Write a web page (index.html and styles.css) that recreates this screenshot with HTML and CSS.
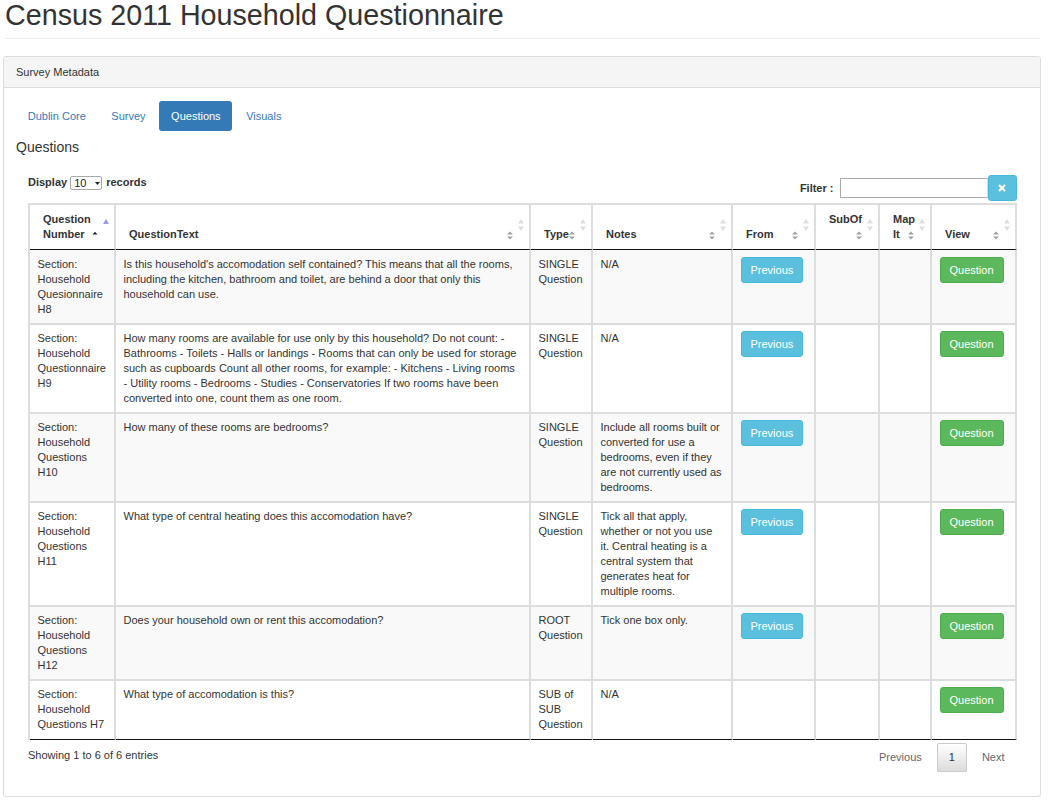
FILE: index.html
```html
<!DOCTYPE html>
<html lang="en">
<head>
<meta charset="utf-8">
<title>Census 2011 Household Questionnaire</title>
<link rel="stylesheet" href="styles.css">
</head>
<body>
<div class="container">
  <div class="page-header"><h1>Census 2011 Household Questionnaire</h1></div>
  <div class="panel">
    <div class="panel-heading">Survey Metadata</div>
    <div class="panel-body">
      <ul class="nav">
        <li><a href="#">Dublin Core</a></li>
        <li><a href="#">Survey</a></li>
        <li class="active"><a href="#">Questions</a></li>
        <li><a href="#">Visuals</a></li>
      </ul>
      <h4 class="section-title">Questions</h4>
      <div class="dt-wrap">
        <div class="dt-top">
          <div class="dt-length">Display <span class="select">10 <svg width="5" height="3" viewBox="0 0 5 3"><polygon points="0,0 5,0 2.5,3" fill="#222"/></svg></span> records</div>
          <div class="dt-filter">
            <span class="filter-label">Filter :</span>
            <span class="filter-input"></span>
            <span class="btn-clear"><svg width="8" height="8" viewBox="0 0 8 8"><path d="M1 1 L7 7 M7 1 L1 7" stroke="#fff" stroke-width="2.2"/></svg></span>
          </div>
        </div>
        <table class="dt">
          <thead>
            <tr>
              <th class="c1">Question Number<span class="sg"><svg width="6" height="9" viewBox="0 0 6 9"><polygon points="0.5,3.5 3,0.8 5.5,3.5" fill="#222"/></svg></span><span class="sf"><svg width="6" height="12" viewBox="0 0 6 12"><polygon points="0,5 3,0 6,5" fill="#9a9ae2"/></svg></span></th>
              <th class="c2">QuestionText<span class="sg"><svg width="6" height="9" viewBox="0 0 6 9"><polygon points="0,3.5 3,0.5 6,3.5" fill="#a0a0a0"/><polygon points="0,5.5 3,8.5 6,5.5" fill="#a0a0a0"/></svg></span><span class="sf"><svg width="6" height="12" viewBox="0 0 6 12"><polygon points="0,4.5 3,0 6,4.5" fill="#dedede"/><polygon points="0,7.5 3,12 6,7.5" fill="#dedede"/></svg></span></th>
              <th class="c3">Type<span class="sg sg-tight"><svg width="6" height="9" viewBox="0 0 6 9"><polygon points="0,3.5 3,0.5 6,3.5" fill="#a0a0a0"/><polygon points="0,5.5 3,8.5 6,5.5" fill="#a0a0a0"/></svg></span><span class="sf"><svg width="6" height="12" viewBox="0 0 6 12"><polygon points="0,4.5 3,0 6,4.5" fill="#dedede"/><polygon points="0,7.5 3,12 6,7.5" fill="#dedede"/></svg></span></th>
              <th class="c4">Notes<span class="sg"><svg width="6" height="9" viewBox="0 0 6 9"><polygon points="0,3.5 3,0.5 6,3.5" fill="#a0a0a0"/><polygon points="0,5.5 3,8.5 6,5.5" fill="#a0a0a0"/></svg></span><span class="sf"><svg width="6" height="12" viewBox="0 0 6 12"><polygon points="0,4.5 3,0 6,4.5" fill="#dedede"/><polygon points="0,7.5 3,12 6,7.5" fill="#dedede"/></svg></span></th>
              <th class="c5">From<span class="sg"><svg width="6" height="9" viewBox="0 0 6 9"><polygon points="0,3.5 3,0.5 6,3.5" fill="#a0a0a0"/><polygon points="0,5.5 3,8.5 6,5.5" fill="#a0a0a0"/></svg></span><span class="sf"><svg width="6" height="12" viewBox="0 0 6 12"><polygon points="0,4.5 3,0 6,4.5" fill="#dedede"/><polygon points="0,7.5 3,12 6,7.5" fill="#dedede"/></svg></span></th>
              <th class="c6">SubOf<br><span class="sg"><svg width="6" height="9" viewBox="0 0 6 9"><polygon points="0,3.5 3,0.5 6,3.5" fill="#a0a0a0"/><polygon points="0,5.5 3,8.5 6,5.5" fill="#a0a0a0"/></svg></span><span class="sf"><svg width="6" height="12" viewBox="0 0 6 12"><polygon points="0,4.5 3,0 6,4.5" fill="#dedede"/><polygon points="0,7.5 3,12 6,7.5" fill="#dedede"/></svg></span></th>
              <th class="c7">Map It<span class="sg"><svg width="6" height="9" viewBox="0 0 6 9"><polygon points="0,3.5 3,0.5 6,3.5" fill="#a0a0a0"/><polygon points="0,5.5 3,8.5 6,5.5" fill="#a0a0a0"/></svg></span><span class="sf"><svg width="6" height="12" viewBox="0 0 6 12"><polygon points="0,4.5 3,0 6,4.5" fill="#dedede"/><polygon points="0,7.5 3,12 6,7.5" fill="#dedede"/></svg></span></th>
              <th class="c8">View<span class="sg"><svg width="6" height="9" viewBox="0 0 6 9"><polygon points="0,3.5 3,0.5 6,3.5" fill="#a0a0a0"/><polygon points="0,5.5 3,8.5 6,5.5" fill="#a0a0a0"/></svg></span><span class="sf"><svg width="6" height="12" viewBox="0 0 6 12"><polygon points="0,4.5 3,0 6,4.5" fill="#dedede"/><polygon points="0,7.5 3,12 6,7.5" fill="#dedede"/></svg></span></th>
            </tr>
          </thead>
          <tbody>
            <tr>
              <td>Section: Household Quesionnaire H8</td>
              <td>Is this household's accomodation self contained? This means that all the rooms, including the kitchen, bathroom and toilet, are behind a door that only this household can use.</td>
              <td>SINGLE Question</td>
              <td>N/A</td>
              <td><span class="btn btn-info">Previous</span></td>
              <td></td>
              <td></td>
              <td><span class="btn btn-success">Question</span></td>
            </tr>
            <tr>
              <td>Section: Household Questionnaire H9</td>
              <td>How many rooms are available for use only by this household? Do not count: - Bathrooms - Toilets - Halls or landings - Rooms that can only be used for storage such as cupboards Count all other rooms, for example: - Kitchens - Living rooms - Utility rooms - Bedrooms - Studies - Conservatories If two rooms have been converted into one, count them as one room.</td>
              <td>SINGLE Question</td>
              <td>N/A</td>
              <td><span class="btn btn-info">Previous</span></td>
              <td></td>
              <td></td>
              <td><span class="btn btn-success">Question</span></td>
            </tr>
            <tr>
              <td>Section: Household Questions H10</td>
              <td>How many of these rooms are bedrooms?</td>
              <td>SINGLE Question</td>
              <td>Include all rooms built or converted for use a bedrooms, even if they are not currently used as bedrooms.</td>
              <td><span class="btn btn-info">Previous</span></td>
              <td></td>
              <td></td>
              <td><span class="btn btn-success">Question</span></td>
            </tr>
            <tr>
              <td>Section: Household Questions H11</td>
              <td>What type of central heating does this accomodation have?</td>
              <td>SINGLE Question</td>
              <td>Tick all that apply, whether or not you use it. Central heating is a central system that generates heat for multiple rooms.</td>
              <td><span class="btn btn-info">Previous</span></td>
              <td></td>
              <td></td>
              <td><span class="btn btn-success">Question</span></td>
            </tr>
            <tr>
              <td>Section: Household Questions H12</td>
              <td>Does your household own or rent this accomodation?</td>
              <td>ROOT Question</td>
              <td>Tick one box only.</td>
              <td><span class="btn btn-info">Previous</span></td>
              <td></td>
              <td></td>
              <td><span class="btn btn-success">Question</span></td>
            </tr>
            <tr>
              <td>Section: Household Questions H7</td>
              <td>What type of accomodation is this?</td>
              <td>SUB of SUB Question</td>
              <td>N/A</td>
              <td></td>
              <td></td>
              <td></td>
              <td><span class="btn btn-success">Question</span></td>
            </tr>
          </tbody>
        </table>
        <div class="dt-bottom">
          <div class="dt-info">Showing 1 to 6 of 6 entries</div>
          <div class="dt-paginate">
            <span class="pg">Previous</span>
            <span class="pg current">1</span>
            <span class="pg">Next</span>
          </div>
        </div>
      </div>
    </div>
  </div>
</div>
</body>
</html>
```
FILE: styles.css
```css
body {
  margin: 0;
  font-family: "Liberation Sans", Arial, Helvetica, sans-serif;
  font-size: 11px;
  line-height: 15px;
  color: #333;
  background: #fff;
}

.container {
  padding: 0 10px 0 3px;
}

.page-header {
  margin: 0 1px 17px 2px;
  padding-bottom: 6.75px;
  border-bottom: 1px solid #eee;
}

.page-header h1 {
  margin: 0;
  font-size: 28.7px;
  line-height: 31.35px;
  font-weight: normal;
  color: #333;
}

.panel {
  border: 1px solid #ddd;
  border-radius: 3px;
  background: #fff;
  box-shadow: 0 1px 1px rgba(0, 0, 0, 0.05);
}

.panel-heading {
  background: #f5f5f5;
  border-bottom: 1px solid #ddd;
  padding: 7.5px 11.25px 7.5px 12px;
  border-radius: 2px 2px 0 0;
}

.panel-body {
  padding: 13px 11.25px 11.25px 12px;
}

.nav {
  display: flex;
  list-style: none;
  margin: 0;
  padding: 0;
  gap: 2px;
}

.nav a {
  display: block;
  padding: 7.5px 11.75px;
  border-radius: 3px;
  color: #337ab7;
  text-decoration: none;
}

.nav .active a {
  background: #337ab7;
  color: #fff;
}

.section-title {
  margin: 8px 0 19px;
  font-size: 14px;
  line-height: 17px;
  font-weight: normal;
}

.dt-wrap {
  padding: 0 12.25px 0 12px;
}

.dt-top {
  display: flex;
  justify-content: space-between;
  align-items: flex-start;
  height: 26px;
  margin-bottom: 2px;
}

.dt-length {
  font-weight: bold;
  display: flex;
  align-items: center;
  height: 15px;
}

.select {
  display: inline-flex;
  align-items: center;
  gap: 9px;
  box-sizing: border-box;
  width: 32px;
  height: 14px;
  margin: 1px 4px 0 3px;
  padding: 0 0 0 3px;
  border: 1px solid #a9a9a9;
  border-radius: 2px;
  font-weight: normal;
  font-size: 11px;
  line-height: 12px;
  color: #222;
}

.dt-filter {
  display: flex;
  align-items: center;
}

.filter-label {
  font-weight: bold;
  margin-right: 6px;
}

.filter-input {
  display: block;
  box-sizing: border-box;
  width: 148px;
  height: 20px;
  border: 1px solid #a9a9a9;
  border-right-color: #ddd;
  background: #fff;
}

.btn-clear {
  display: flex;
  align-items: center;
  justify-content: center;
  box-sizing: border-box;
  width: 29px;
  height: 26px;
  background: #5bc0de;
  border: 1px solid #46b8da;
  border-radius: 3px;
}

.dt {
  width: 100%;
  table-layout: fixed;
  border-collapse: separate;
  border-spacing: 0;
  border-left: 2px solid #ddd;
  border-top: 2px solid #ddd;
}

.dt th,
.dt td {
  box-sizing: border-box;
  text-align: left;
  border-right: 2px solid #ddd;
  border-bottom: 2px solid #ddd;
}

.dt th {
  position: relative;
  font-weight: bold;
  vertical-align: bottom;
  padding: 6.5px 16px 7.5px 13px;
  border-bottom: 1px solid #111;
}

.dt .c1 { width: 86px; }
.dt .c2 { width: 415px; }
.dt .c3 { width: 62px; }
.dt .c4 { width: 140px; }
.dt .c5 { width: 83px; }
.dt .c6 { width: 64px; }
.dt .c7 { width: 52px; }
.dt .c8 { width: 85px; }

.sg {
  float: right;
  height: 11px;
  margin-top: 4px;
}

.sg-tight {
  margin-left: -3px;
}

.sg svg,
.sf svg {
  display: block;
}

.sf {
  position: absolute;
  right: 5px;
  top: 14px;
}

.dt td {
  vertical-align: top;
  padding: 6px 7.5px 6px;
}

.dt td:nth-child(2) {
  padding-right: 10px;
}

.dt tbody tr:first-child td {
  padding-top: 7px;
}

.dt tbody tr:nth-child(odd) td {
  background: #f9f9f9;
}

.dt tbody tr:last-child td {
  border-bottom: 1px solid #111;
  padding-bottom: 7px;
}

.btn {
  display: inline-block;
  padding: 4.5px 9px;
  border: 1px solid transparent;
  border-radius: 3px;
  color: #fff;
  white-space: nowrap;
}

.btn-info {
  background: #5bc0de;
  border-color: #46b8da;
}

.btn-success {
  background: #5cb85c;
  border-color: #4cae4c;
}

.dt-bottom {
  display: flex;
  justify-content: space-between;
  align-items: flex-start;
  margin-bottom: 13px;
}

.dt-info {
  padding-top: 8px;
}

.dt-paginate {
  display: flex;
  padding-top: 3px;
}

.pg {
  padding: 6px 11px;
  margin-left: 3px;
  border: 1px solid transparent;
  border-radius: 2px;
  color: #666;
}

.pg.current {
  border-color: #cacaca;
  background: linear-gradient(#fff, #dcdcdc);
  color: #333;
}
```
